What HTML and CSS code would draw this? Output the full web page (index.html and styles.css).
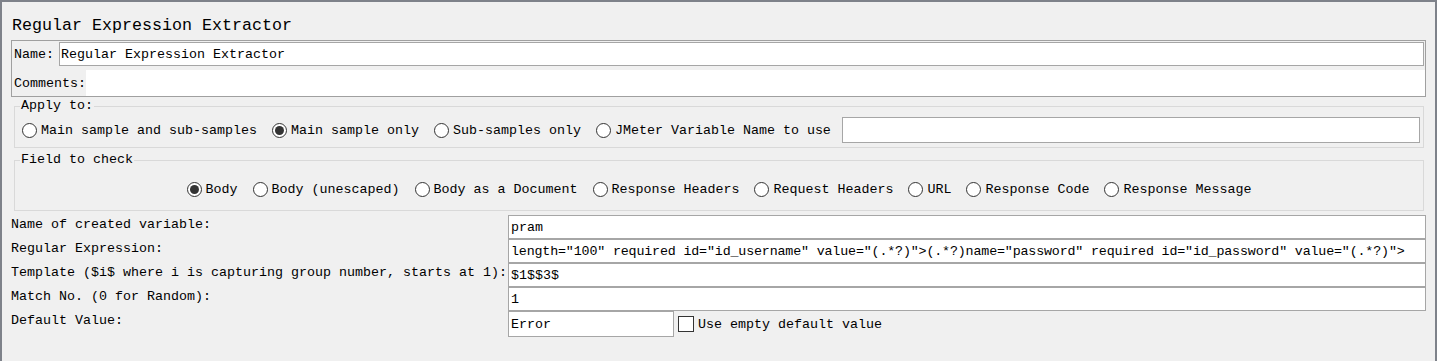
FILE: index.html
```html
<!DOCTYPE html>
<html>
	<head>
		<meta charset="UTF-8">
		<title>Regular Expression Extractor</title>
		<link rel="stylesheet" href="styles.css">
	</head>
	<body>
		<div class="frame">
			<div class="title">Regular Expression Extractor</div>
			<div class="namebox">
				<div class="name-row">
					<span class="lbl">Name:</span>
					<div class="field">Regular Expression Extractor</div>
				</div>
				<div class="comments-row">
					<span class="lbl">Comments:</span>
					<div class="field plain"></div>
				</div>
			</div>
			<fieldset class="group apply">
				<legend>Apply to:</legend>
				<div class="radios">
					<label class="radio"><span class="ring"></span>Main sample and sub-samples</label>
					<label class="radio"><span class="ring on"></span>Main sample only</label>
					<label class="radio"><span class="ring"></span>Sub-samples only</label>
					<label class="radio last"><span class="ring"></span>JMeter Variable Name to use</label>
					<div class="field var"></div>
				</div>
			</fieldset>
			<fieldset class="group check">
				<legend>Field to check</legend>
				<div class="radios center">
					<label class="radio"><span class="ring on"></span>Body</label>
					<label class="radio"><span class="ring"></span>Body (unescaped)</label>
					<label class="radio"><span class="ring"></span>Body as a Document</label>
					<label class="radio"><span class="ring"></span>Response Headers</label>
					<label class="radio"><span class="ring"></span>Request Headers</label>
					<label class="radio"><span class="ring"></span>URL</label>
					<label class="radio"><span class="ring"></span>Response Code</label>
					<label class="radio last0"><span class="ring"></span>Response Message</label>
				</div>
			</fieldset>
			<div class="params">
				<div class="plabel">Name of created variable:</div>
				<div class="field">pram</div>
				<div class="plabel">Regular Expression:</div>
				<div class="field tight">length="100" required id="id_username" value="(.*?)"&gt;(.*?)name="password" required id="id_password" value="(.*?)"&gt;</div>
				<div class="plabel">Template ($i$ where i is capturing group number, starts at 1):</div>
				<div class="field">$1$$3$</div>
				<div class="plabel">Match No. (0 for Random):</div>
				<div class="field">1</div>
				<div class="plabel">Default Value:</div>
				<div class="default-row">
					<div class="field short">Error</div>
					<span class="checkbox"></span>
					<span class="cb-text">Use empty default value</span>
				</div>
			</div>
		</div>
	</body>
</html>
```

FILE: styles.css
```css
body{margin:0; background:#f0f0f0; font-family:"Liberation Mono","DejaVu Sans Mono",monospace; font-size:13.33px; color:#000;}
.frame{
	width:1437px; height:361px; box-sizing:border-box; overflow:hidden;
	border:2px solid #7e828a; border-bottom:none;
	padding:0 9px; background:#f0f0f0;
}
.title{font-size:16.67px; line-height:20px; margin:14px 0 4px 1px; white-space:pre;}

.namebox{border:1px solid #a0a0a0; padding:0 1px 0 2px;}
.name-row{display:flex; align-items:center; padding-top:1px;}
.name-row .lbl{margin-right:5px;}
.comments-row{display:flex; align-items:center; margin-top:4px; height:26px; margin-right:-1px;}
.lbl{white-space:pre; line-height:18px; padding-top:1px;}

.field{
	background:#fff; border:1px solid #a6a6a6; height:24px; box-sizing:border-box;
	padding:1px 2px 0; line-height:22px; white-space:pre; overflow:hidden; flex:1;
}
.field.plain{border:none; height:26px;}
.name-row .field{padding-left:1px;}

.group{margin:0 2px 0 3px; border:1px solid #d9d9d9; min-inline-size:0;}
.group legend{padding:0 1px; margin-left:-2px; line-height:16px;}
.apply{margin-top:1px; padding:3px 3px 4px 7px;}
.check{margin-top:4px; padding:11px 7px 11px 7px;}

.radios{display:flex; align-items:center;}
.radios.center{justify-content:center; height:20px;}
.apply .radios{height:26px;}
.radio{display:flex; align-items:center; margin-right:15px; white-space:pre; line-height:18px; padding-top:1px;}
.radio.last{margin-right:11px;}
.radio.last0{margin-right:0;}
.ring{
	width:15px; height:15px; box-sizing:border-box; border:1px solid #333; border-radius:50%;
	background:#fff; margin-right:4px; display:flex; align-items:center; justify-content:center; flex:none;
}
.ring.on::after{content:""; width:9px; height:9px; border-radius:50%; background:#333;}
.field.var{height:26px;}

.params{display:grid; grid-template-columns:497px 1fr; grid-template-rows:24px 24px 24px 24px 26px; margin-top:4px;}
.plabel{line-height:18px; white-space:pre; align-self:start; padding-top:1px;}
.tight{letter-spacing:-0.16px;}
.default-row{display:flex; align-items:center;}
.field.short{flex:none; width:166px; height:26px; line-height:24px;}
.checkbox{width:16px; height:16px; box-sizing:border-box; border:1px solid #333; background:#fff; margin-left:4px; margin-right:4px;}
.cb-text{white-space:pre; padding-top:1px;}
```
